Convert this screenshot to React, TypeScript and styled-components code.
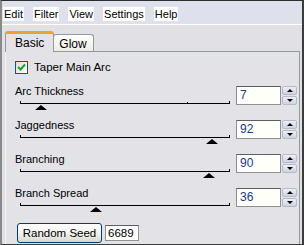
import styled, { createGlobalStyle } from 'styled-components'

const GlobalStyle = createGlobalStyle`
	body {
		margin: 0;
		background: #ffffff;
	}
`

type SliderSetting = {
	label: string
	value: number
	pos: number
	midTick?: number
}

const SETTINGS: SliderSetting[] = [
	{ label: 'Arc Thickness', value: 7, pos: 0.1, midTick: 0.8 },
	{ label: 'Jaggedness', value: 92, pos: 0.92 },
	{ label: 'Branching', value: 90, pos: 0.905 },
	{ label: 'Branch Spread', value: 36, pos: 0.365 },
]

const MENU = ['Edit', 'Filter', 'View', 'Settings', 'Help']

const TRACK_WIDTH = 209

export default function App() {
	return (
		<>
			<GlobalStyle />
			<Window>
				<MenuBar>
					{MENU.map((item) => (
						<MenuItem key={item}>{item}</MenuItem>
					))}
				</MenuBar>
				<Body>
					<Tabs>
						<Tab $active>Basic</Tab>
						<Tab>Glow</Tab>
					</Tabs>
					<Panel>
						<CheckRow>
							<CheckBox>
								<svg width="9" height="9" viewBox="0 0 9 9">
									<path d="M1 4 L3.5 6.5 L8 1.5" fill="none" stroke="#21a121" strokeWidth="2" />
								</svg>
							</CheckBox>
							Taper Main Arc
						</CheckRow>
						{SETTINGS.map((s) => (
							<SliderRow key={s.label}>
								<SliderColumn>
									<Label>{s.label}</Label>
									<SliderArea>
										<Track>
											<Tick $at={0} />
											{s.midTick !== undefined && <Tick $at={s.midTick} $short />}
											<Tick $at={1} />
											<Thumb style={{ left: Math.round(s.pos * TRACK_WIDTH) - 6 }} />
										</Track>
									</SliderArea>
								</SliderColumn>
								<Spin>
									<SpinInput>{s.value}</SpinInput>
									<SpinButtons>
										<SpinButton>
											<Arrow $up />
										</SpinButton>
										<SpinButton>
											<Arrow />
										</SpinButton>
									</SpinButtons>
								</Spin>
							</SliderRow>
						))}
						<SeedRow>
							<Button>Random Seed</Button>
							<SeedInput>6689</SeedInput>
						</SeedRow>
					</Panel>
				</Body>
			</Window>
		</>
	)
}

const Window = styled.div`
	width: 304px;
	height: 245px;
	box-sizing: border-box;
	border-top: 1px solid #2e2e2e;
	border-left: 2px solid #8a8a8a;
	border-right: 2px solid #3c3c3c;
	border-bottom: 1px solid #3c3c3c;
	display: flex;
	flex-direction: column;
	overflow: hidden;
	background: #e1e0e5;
	font-family: 'Liberation Sans', Arial, sans-serif;
	font-size: 11px;
	color: #000;
`

const MenuBar = styled.div`
	height: 23px;
	flex-shrink: 0;
	display: flex;
	align-items: center;
	gap: 9px;
	padding-left: 1px;
	background: #dee1ec;
	border-bottom: 1px solid #ffffff;
	font-size: 11px;
`

const MenuItem = styled.span`
	background: #ffffff;
	padding: 0 1px;
	line-height: 14px;
	margin-top: 3px;
`

const Body = styled.div`
	flex: 1;
	display: flex;
	flex-direction: column;
	padding: 6px 2px 0 3px;
	min-height: 0;
`

const Tabs = styled.div`
	display: flex;
	align-items: flex-end;
	height: 20px;
	position: relative;
	z-index: 1;
`

const Tab = styled.div<{ $active?: boolean }>`
	box-sizing: border-box;
	height: ${({ $active }) => ($active ? '21px' : '17px')};
	margin-bottom: ${({ $active }) => ($active ? '-1px' : '0')};
	padding: ${({ $active }) => ($active ? '3px 9px 0' : '3px 6px 0 5px')};
	border: 1px solid #919b9c;
	border-bottom: none;
	border-top: ${({ $active }) => ($active ? '3px solid #f0a030' : '1px solid #919b9c')};
	border-radius: 3px 3px 0 0;
	background: ${({ $active }) => ($active ? '#e3e2e7' : 'linear-gradient(#ffffff, #ecebe6)')};
	font-size: 12px;
	line-height: 13px;
	margin-left: ${({ $active }) => ($active ? '0' : '-1px')};
`

const Panel = styled.div`
	flex: 1;
	display: flex;
	flex-direction: column;
	box-sizing: border-box;
	border: 1px solid #919b9c;
	border-bottom: none;
	border-left-color: #f4f4f4;
	padding: 0 0 0 9px;
	background: #e3e2e7;
`

const CheckRow = styled.div`
	display: flex;
	align-items: center;
	gap: 6px;
	height: 16px;
	margin-top: 7px;
	font-size: 11.5px;
`

const CheckBox = styled.div`
	width: 13px;
	height: 13px;
	box-sizing: border-box;
	border: 1px solid #1c5180;
	background: linear-gradient(135deg, #dcdcd7, #ffffff);
	display: flex;
	align-items: center;
	justify-content: center;
`

const SliderRow = styled.div`
	display: flex;
	height: 34px;
	flex-shrink: 0;
	${CheckRow} + & {
		margin-top: 9px;
	}
`

const SliderColumn = styled.div`
	width: 217px;
	display: flex;
	flex-direction: column;
`

const Label = styled.div`
	line-height: 13px;
	height: 13px;
	font-size: 11px;
	padding-top: 1px;
`

const SliderArea = styled.div`
	height: 15px;
	padding: 5px 0 0 5px;
	box-sizing: border-box;
`

const Track = styled.div`
	position: relative;
	width: ${TRACK_WIDTH + 1}px;
	height: 1px;
	background: #000;
`

const Tick = styled.div<{ $at: number; $short?: boolean }>`
	position: absolute;
	left: ${({ $at }) => Math.round($at * TRACK_WIDTH)}px;
	bottom: 0;
	width: 1px;
	height: ${({ $short }) => ($short ? '2px' : '3px')};
	background: #000;
`

const Thumb = styled.div`
	position: absolute;
	top: 2px;
	width: 0;
	height: 0;
	border-left: 6px solid transparent;
	border-right: 6px solid transparent;
	border-bottom: 5px solid #000;
`

const Spin = styled.div`
	display: flex;
	margin: 2px 0 0 4px;
	height: 19px;
`

const SpinInput = styled.div`
	width: 45px;
	box-sizing: border-box;
	border: 1px solid #8d9299;
	border-top-color: #5c6066;
	background: #fffffa;
	padding-left: 3px;
	line-height: 17px;
	font-size: 12px;
	color: #173a8c;
`

const SpinButtons = styled.div`
	display: flex;
	flex-direction: column;
	gap: 1px;
	margin-left: 1px;
`

const SpinButton = styled.div`
	width: 15px;
	height: 9px;
	box-sizing: border-box;
	border: 1px solid #b4bccb;
	border-radius: 2px;
	background: linear-gradient(#eef0f5, #ccd2e0);
	display: flex;
	align-items: center;
	justify-content: center;
`

const Arrow = styled.div<{ $up?: boolean }>`
	width: 0;
	height: 0;
	border-left: 3px solid transparent;
	border-right: 3px solid transparent;
	${({ $up }) => ($up ? 'border-bottom: 3px solid #000;' : 'border-top: 3px solid #000;')}
`

const SeedRow = styled.div`
	display: flex;
	align-items: center;
	gap: 3px;
	margin: 3px 0 0 2px;
`

const Button = styled.div`
	width: 85px;
	height: 20px;
	box-sizing: border-box;
	border: 1px solid #003c74;
	border-radius: 3px;
	background: linear-gradient(#ffffff 0%, #f0efea 60%, #d8d6ce 100%);
	display: flex;
	align-items: center;
	justify-content: center;
	font-size: 11.5px;
`

const SeedInput = styled.div`
	width: 34px;
	height: 16px;
	box-sizing: border-box;
	border: 1px solid #8d9299;
	border-top-color: #5c6066;
	background: #ffffff;
	padding-left: 2px;
	line-height: 14px;
	font-size: 11.5px;
`
